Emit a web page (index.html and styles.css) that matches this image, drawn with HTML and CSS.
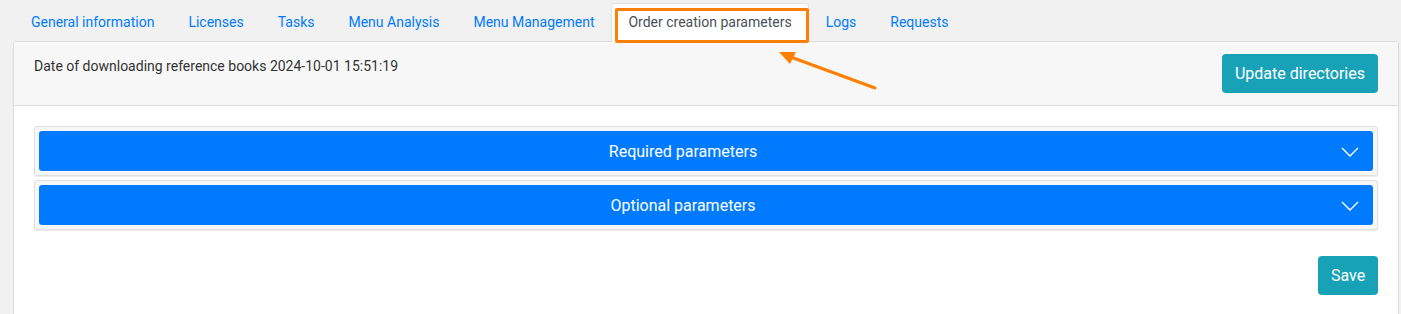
FILE: index.html
```html
<!DOCTYPE html>
<html>
<head>
<meta charset="utf-8">
<link rel="stylesheet" href="styles.css">
</head>
<body>
<nav class="tabs">
  <a class="tab">General information</a>
  <a class="tab">Licenses</a>
  <a class="tab">Tasks</a>
  <a class="tab">Menu Analysis</a>
  <a class="tab">Menu Management</a>
  <a class="tab active">Order creation parameters<span class="highlight"></span></a>
  <a class="tab">Logs</a>
  <a class="tab">Requests</a>
</nav>
<section class="panel">
  <header class="panel-head">
    <span class="date">Date of downloading reference books 2024-10-01 15:51:19</span>
    <button class="btn">Update directories</button>
  </header>
  <div class="panel-body">
    <div class="acc">
      <div class="acc-bar"><span class="acc-title">Required parameters</span>
        <span class="chev-wrap"><svg class="chev" viewBox="0 0 18 10" width="18" height="10"><path d="M1 1 L9 9 L17 1" fill="none" stroke="#fff" stroke-width="1.4"/></svg></span>
      </div>
    </div>
    <div class="acc">
      <div class="acc-bar"><span class="acc-title">Optional parameters</span>
        <span class="chev-wrap"><svg class="chev" viewBox="0 0 18 10" width="18" height="10"><path d="M1 1 L9 9 L17 1" fill="none" stroke="#fff" stroke-width="1.4"/></svg></span>
      </div>
    </div>
    <div class="actions"><button class="btn">Save</button></div>
  </div>
</section>
<svg class="arrow" width="120" height="60" viewBox="770 40 120 60">
  <line x1="875" y1="88" x2="788" y2="56" stroke="#ff7f00" stroke-width="3" stroke-linecap="round"/>
  <polygon points="779,52 796,52 790,64" fill="#ff7f00"/>
</svg>
</body>
</html>
```
FILE: styles.css
```css
html, body {
  margin: 0;
  padding: 0;
}
body {
  background: #f1f1f1;
  font-family: Roboto, "Liberation Sans", Arial, sans-serif;
  height: 314px;
  overflow: hidden;
  position: relative;
}
.tabs {
  display: flex;
  align-items: flex-start;
  padding: 3px 0 0 14px;
  height: 38px;
  position: relative;
  z-index: 2;
}
.tab {
  display: flex;
  align-items: center;
  box-sizing: border-box;
  padding: 0 16px 2px 16px;
  height: 38px;
  font-size: 14px;
  color: #007bff;
  border: 1px solid transparent;
  border-bottom: none;
  border-radius: 4px 4px 0 0;
  white-space: nowrap;
}
.tab.active {
  background: #fff;
  color: #495057;
  border-color: #dee2e6;
  height: 39px;
  position: relative;
}
.highlight {
  position: absolute;
  left: 3px;
  top: 4px;
  right: -1px;
  bottom: -1px;
  border: 3px solid #ff7f00;
  border-radius: 2px;
}
.panel {
  box-sizing: border-box;
  margin: 0 2px 0 13px;
  border: 1px solid #dcdcdc;
  border-bottom: none;
  border-radius: 4px 4px 0 0;
  background: #fff;
  height: 273px;
}
.panel-head {
  background: #f7f7f7;
  border-bottom: 1px solid #dcdcdc;
  display: flex;
  justify-content: space-between;
  align-items: flex-start;
  padding: 12px 20px 12px 20px;
}
.date {
  font-size: 14px;
  color: #333;
  line-height: 20px;
  margin-top: 2px;
}
.btn {
  font-family: Roboto, "Liberation Sans", Arial, sans-serif;
  background: #17a2b8;
  color: #fff;
  border: none;
  border-radius: 4px;
  font-size: 16px;
  height: 39px;
  padding: 0 13px;
}
.panel-body {
  padding: 20px;
}
.acc {
  box-sizing: border-box;
  height: 50px;
  background: #f7f7f7;
  border: 1px solid #e0e0e0;
  border-radius: 3px;
  box-shadow: 0 1px 1px rgba(0,0,0,0.08);
  padding: 4px;
  margin-bottom: 4px;
}
.acc-bar {
  background: #007bff;
  color: #fff;
  border-radius: 3px;
  height: 40px;
  display: flex;
  align-items: center;
  font-size: 16px;
}
.acc-title {
  flex: 1;
  text-align: center;
}
.chev-wrap {
  width: 46px;
  display: flex;
  justify-content: center;
  padding-top: 1px;
}
.actions {
  display: flex;
  justify-content: flex-end;
  margin-top: 26px;
}
.actions .btn {
  width: 60px;
  padding: 0;
}
.arrow {
  position: absolute;
  left: 770px;
  top: 40px;
  z-index: 3;
}
```
